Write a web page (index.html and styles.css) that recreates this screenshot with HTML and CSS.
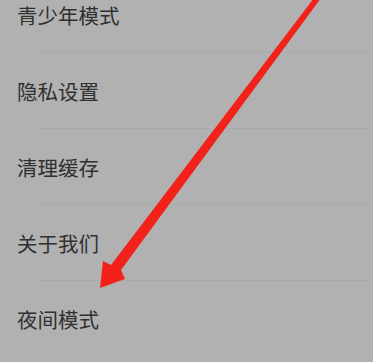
FILE: index.html
```html
<!DOCTYPE html>
<html lang="zh-CN">
  <head>
    <meta charset="UTF-8" />
    <meta name="viewport" content="width=device-width, initial-scale=1.0" />
    <title>设置</title>
    <link rel="stylesheet" href="styles.css">
  </head>
  <body>
    <div class="settings">
      <ul class="menu">
        <li class="menu-item">青少年模式</li>
        <li class="menu-item">隐私设置</li>
        <li class="menu-item">清理缓存</li>
        <li class="menu-item">关于我们</li>
        <li class="menu-item">夜间模式</li>
      </ul>
      <svg class="arrow" width="373" height="362" viewBox="0 0 373 362">
        <polygon points="314,-2 321,-2 121,270 125,279 100,288 103,261 111,265" fill="#f2221b" />
      </svg>
    </div>
  </body>
</html>
```

FILE: styles.css
```css
body {
  margin: 0;
  background-color: #b1b1b1;
  font-family: "Noto Sans CJK SC", "Noto Sans", sans-serif;
  overflow: hidden;
}

.settings {
  position: relative;
  height: 362px;
  overflow: hidden;
}

.menu {
  list-style: none;
  margin: -23px 0 0 0;
  padding: 0;
}

.menu-item {
  display: flex;
  align-items: center;
  height: 76px;
  padding-left: 17px;
  font-size: 20.5px;
  color: #303030;
  position: relative;
}

.menu-item + .menu-item::before {
  content: "";
  position: absolute;
  top: -1px;
  left: 35px;
  right: 0;
  border-top: 1px solid #aaaaaa;
}

.arrow {
  position: absolute;
  top: 0;
  left: 0;
}
```
